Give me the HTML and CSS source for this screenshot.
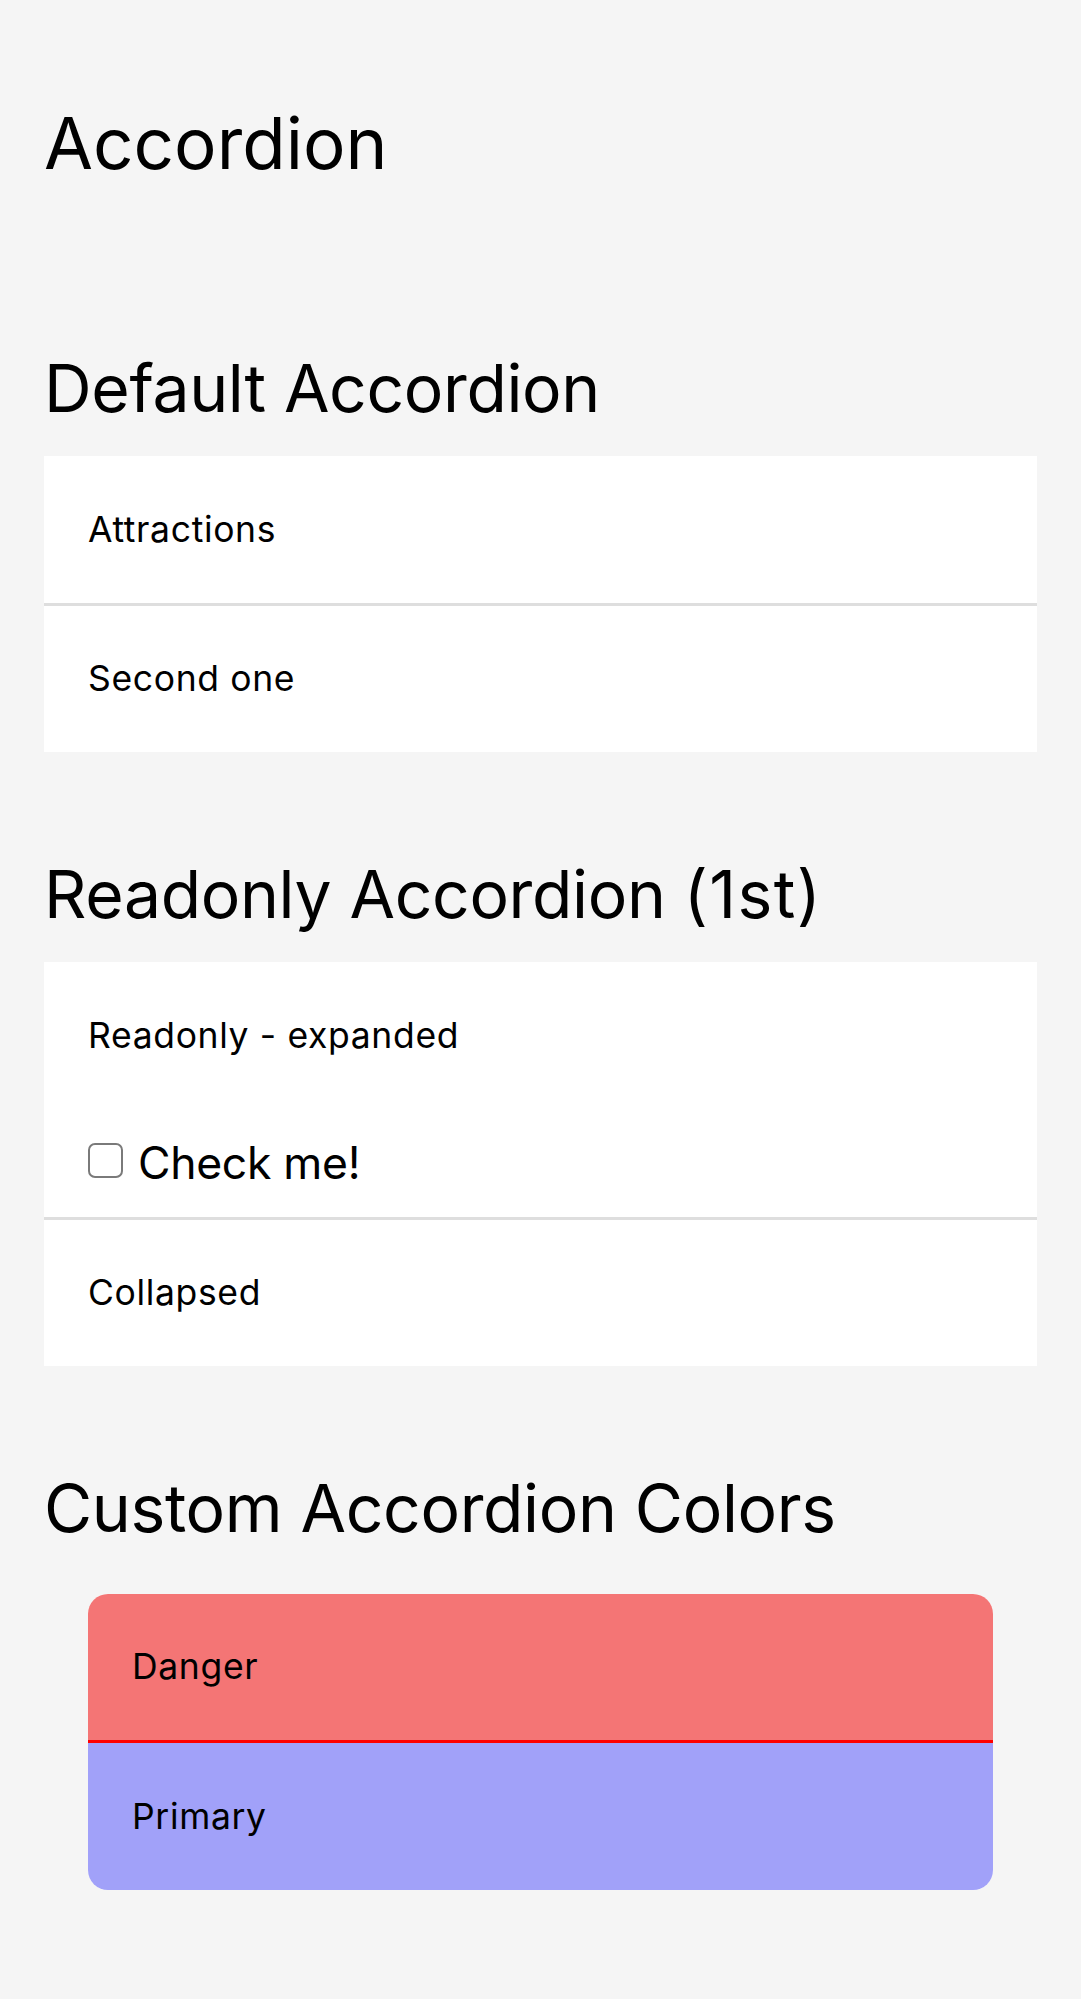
FILE: index.html
```html
<!DOCTYPE html>
<html lang="en">
<head>
<meta charset="utf-8">
<title>Accordion</title>
<link rel="stylesheet" href="styles.css">
</head>
<body>
<main class="page">
  <h1 class="title">Accordion</h1>

  <section class="section section-first">
    <h2 class="section-title">Default Accordion</h2>
    <div class="accordion">
      <div class="acc-item">
        <div class="acc-header">Attractions</div>
      </div>
      <div class="acc-item">
        <div class="acc-header">Second one</div>
      </div>
    </div>
  </section>

  <section class="section">
    <h2 class="section-title">Readonly Accordion <span class="paren">(1st)</span></h2>
    <div class="accordion">
      <div class="acc-item">
        <div class="acc-header">Readonly - expanded</div>
        <div class="acc-content">
          <label class="check"><input class="check-box" type="checkbox"><span>Check me!</span></label>
        </div>
      </div>
      <div class="acc-item">
        <div class="acc-header">Collapsed</div>
      </div>
    </div>
  </section>

  <section class="section">
    <h2 class="section-title">Custom Accordion Colors</h2>
    <div class="accordion accordion-card">
      <div class="acc-item acc-danger">
        <div class="acc-header">Danger</div>
      </div>
      <div class="acc-item acc-primary">
        <div class="acc-header">Primary</div>
      </div>
    </div>
  </section>
</main>
</body>
</html>
```

FILE: styles.css
```css
html, body {
  margin: 0;
  padding: 0;
}

body {
  background: #f5f5f5;
  color: #000;
  font-family: Inter, "Noto Sans", sans-serif;
}

.page {
  padding: 0 44px 100px;
}

.title {
  margin: 100px 0 0;
  font-size: 71px;
  line-height: 86px;
  font-weight: 400;
}

.section {
  margin-top: 102px;
}

.section-first {
  margin-top: 162px;
}

.section-title {
  margin: 0 0 28px;
  font-size: 66px;
  line-height: 80px;
  font-weight: 400;
  letter-spacing: -0.35px;
}

.paren {
  letter-spacing: 1.4px;
}

.accordion {
  background: #fff;
}

.acc-item {
  border-bottom: 3px solid #dedede;
}

.acc-item:last-child {
  border-bottom: none;
}

.acc-header {
  display: flex;
  align-items: center;
  height: 146.5px;
  padding: 0 44px;
  font-size: 35.5px;
  letter-spacing: 0.65px;
}

.acc-content {
  padding: 27px 44px;
}

.check {
  display: flex;
  align-items: flex-start;
  font-size: 44.5px;
  line-height: 54px;
  letter-spacing: -0.3px;
}

.check-box {
  appearance: none;
  -webkit-appearance: none;
  box-sizing: border-box;
  width: 35px;
  height: 35px;
  margin: 7px 15px 0 0;
  border: 2.5px solid #7a7a7a;
  border-radius: 7px;
  background: #fff;
  flex: none;
}

.accordion-card {
  margin: 45.5px 44px 0;
  border-radius: 20px;
  overflow: hidden;
}

.acc-danger {
  background: #f47575;
  border-bottom-color: #ff0000;
}

.acc-primary {
  background: #a1a1f9;
}
```
